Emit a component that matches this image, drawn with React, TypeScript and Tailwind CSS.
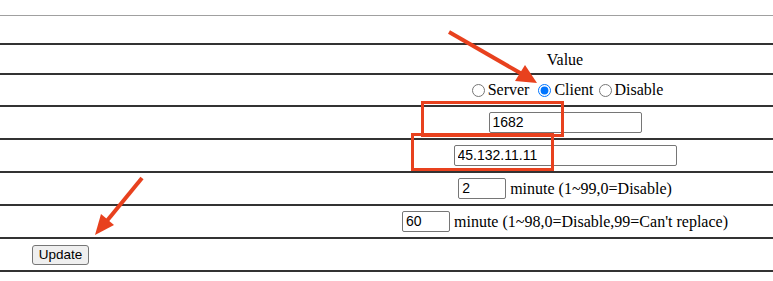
import React from "react";

const serif = { fontFamily: '"Liberation Serif", "Times New Roman", serif' };

function Row({ h, left, children }: { h: string; left?: React.ReactNode; children?: React.ReactNode }) {
  return (
    <div className={`flex ${h} border-b-2 border-[#333333]`}>
      <div className="w-[357px] flex items-center">{left}</div>
      <div className="flex-1 flex items-center justify-center">{children}</div>
    </div>
  );
}

const inputCls =
  "h-[21px] border border-[#767676] rounded-[2px] px-[3px] text-[14px] text-black bg-white font-['Liberation_Sans',Arial,sans-serif] outline-none";

export default function App() {
  return (
    <div className="relative w-[773px] h-[281px] bg-white overflow-hidden text-black text-[16px]" style={serif}>
      <div className="pt-[15px]">
        <div className="border-t border-[#a0a0a0]">
          <Row h="h-[29px]" />
          <Row h="h-[30px]">
            <span className="pt-[1px]">Value</span>
          </Row>
          <Row h="h-[32px]">
            <label className="flex items-center">
              <input type="radio" name="mode" className="m-0 ml-[5px] mr-[3px] w-[13px] h-[13px]" />
              <span>Server&nbsp;</span>
            </label>
            <label className="flex items-center">
              <input type="radio" name="mode" defaultChecked className="m-0 ml-[5px] mr-[3px] w-[13px] h-[13px]" />
              <span>Client</span>
            </label>
            <label className="flex items-center">
              <input type="radio" name="mode" className="m-0 ml-[5px] mr-[3px] w-[13px] h-[13px]" />
              <span>Disable</span>
            </label>
          </Row>
          <Row h="h-[33px]">
            <input type="text" defaultValue="1682" className={`${inputCls} w-[153px]`} />
          </Row>
          <Row h="h-[33px]">
            <input type="text" defaultValue="45.132.11.11" className={`${inputCls} w-[223px]`} />
          </Row>
          <Row h="h-[33px]">
            <input type="text" defaultValue="2" className={`${inputCls} w-[48px]`} />
            <span className="ml-[4px]">minute (1~99,0=Disable)</span>
          </Row>
          <Row h="h-[33px]">
            <input type="text" defaultValue="60" className={`${inputCls} w-[48px]`} />
            <span className="ml-[4px]">minute (1~98,0=Disable,99=Can't replace)</span>
          </Row>
          <Row
            h="h-[33px]"
            left={
              <button className="ml-[32px] h-[20px] w-[57px] border border-[#767676] rounded-[3px] bg-[#efefef] text-[13.5px] font-['Liberation_Sans',Arial,sans-serif] leading-none">
                Update
              </button>
            }
          />
        </div>
      </div>

      <svg className="absolute inset-0 pointer-events-none" width="773" height="281" viewBox="0 0 773 281">
        <line x1="449" y1="32" x2="522" y2="74" stroke="#e8411e" strokeWidth="4" />
        <polygon points="537,83 515,81 525,65" fill="#e8411e" />
        <line x1="142" y1="178" x2="106" y2="222" stroke="#e8411e" strokeWidth="4" />
        <polygon points="95,235 114,225 101,214" fill="#e8411e" />
        <rect x="422.5" y="102.5" width="140" height="33" fill="none" stroke="#e8411e" strokeWidth="3" />
        <rect x="412.5" y="134.5" width="140" height="35" fill="none" stroke="#e8411e" strokeWidth="3" />
      </svg>
    </div>
  );
}
